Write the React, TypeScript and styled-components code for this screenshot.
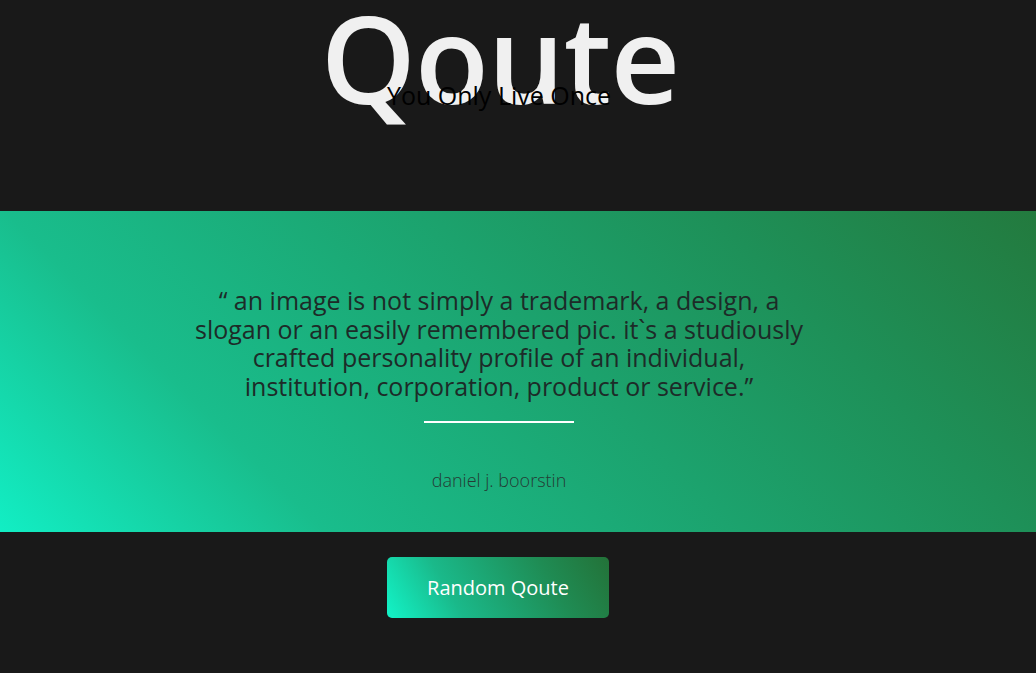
import React from "react";
import styled, { createGlobalStyle } from "styled-components";

const Global = createGlobalStyle`
  html, body { margin: 0; padding: 0; background: #191919; }
  body { font-family: "Open Sans", "Noto Sans", sans-serif; }
`;

const Page = styled.div`
  display: flex;
  flex-direction: column;
  min-height: 673px;
  background: #191919;
`;

const Header = styled.header`
  height: 211px;
  display: flex;
  flex-direction: column;
  align-items: center;
  padding-right: 36px;
  position: relative;
`;

const Title = styled.h1`
  margin: 0;
  font-size: 121px;
  font-weight: 600;
  color: #f0f0f0;
  line-height: 1;
  margin-top: -3px;
  letter-spacing: -1px;
`;

const Subtitle = styled.h2`
  margin: -35px 0 0 0;
  font-size: 25px;
  font-weight: 400;
  color: #000;
  line-height: 1;
  padding-right: 2px;
`;

const Band = styled.section`
  height: 321px;
  background: linear-gradient(45deg, #12eec4 0%, #19bd8c 24%, #1e9058 76%, #237a3e 100%);
  display: flex;
  flex-direction: column;
  align-items: center;
  justify-content: flex-start;
  padding-right: 38px;
  box-sizing: border-box;
  padding-top: 75px;
`;

const QuoteText = styled.p`
  margin: 0;
  width: 614px;
  text-align: center;
  font-size: 25px;
  line-height: 28.7px;
  color: #1d2b28;
  font-weight: 400;
`;

const Rule = styled.div`
  width: 150px;
  height: 2px;
  background: #ffffff;
  margin-top: 20px;
`;

const Author = styled.p`
  margin: 45px 0 0 0;
  font-size: 18px;
  font-weight: 300;
  color: #243b34;
`;

const Footer = styled.div`
  display: flex;
  justify-content: center;
  padding-right: 40px;
  padding-top: 25px;
`;

const Button = styled.button`
  width: 222px;
  height: 61px;
  border: none;
  border-radius: 5px;
  background: linear-gradient(60deg, #12f4c8 0%, #1ab98a 30%, #1f8c54 72%, #237238 100%);
  color: #ffffff;
  font-family: "Open Sans", "Noto Sans", sans-serif;
  font-size: 20px;
  font-weight: 400;
  cursor: pointer;
`;

export default function App() {
  return (
    <Page>
      <Global />
      <Header>
        <Title>Qoute</Title>
        <Subtitle>You Only Live Once</Subtitle>
      </Header>
      <Band>
        <QuoteText>
          “ an image is not simply a trademark, a design, a slogan or an easily remembered pic. it`s a studiously crafted personality profile of an individual, institution, corporation, product or service.”
        </QuoteText>
        <Rule />
        <Author>daniel j. boorstin</Author>
      </Band>
      <Footer>
        <Button>Random Qoute</Button>
      </Footer>
    </Page>
  );
}
